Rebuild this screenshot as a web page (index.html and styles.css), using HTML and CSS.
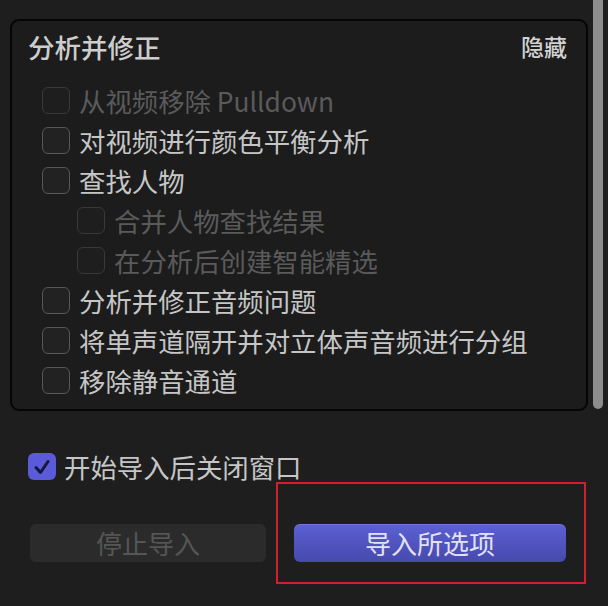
FILE: index.html
```html
<!DOCTYPE html>
<html lang="zh-CN">
<head>
    <meta charset="UTF-8">
    <title>导入选项</title>
    <link rel="stylesheet" href="styles.css">
</head>
<body>
    <div class="window">
        <div class="top">
            <div class="panel">
                <div class="panel-head">
                    <span class="panel-title">分析并修正</span>
                    <span class="panel-toggle">隐藏</span>
                </div>
                <ul class="options">
                    <li class="option disabled"><span class="box"></span>从视频移除 Pulldown</li>
                    <li class="option"><span class="box"></span>对视频进行颜色平衡分析</li>
                    <li class="option"><span class="box"></span>查找人物</li>
                    <li class="option sub disabled"><span class="box"></span>合并人物查找结果</li>
                    <li class="option sub disabled"><span class="box"></span>在分析后创建智能精选</li>
                    <li class="option"><span class="box"></span>分析并修正音频问题</li>
                    <li class="option"><span class="box"></span>将单声道隔开并对立体声音频进行分组</li>
                    <li class="option"><span class="box"></span>移除静音通道</li>
                </ul>
            </div>
            <div class="scroll-track"><div class="scroll-thumb"></div></div>
        </div>

        <div class="close-row">
            <span class="box checked">
                <svg viewBox="0 0 28 28" width="28" height="28"><path d="M8 14.5 L12.5 19.5 L20 8.5" fill="none" stroke="#15163a" stroke-width="3" stroke-linecap="round" stroke-linejoin="round"/></svg>
            </span>
            开始导入后关闭窗口
        </div>

        <div class="actions">
            <button class="btn btn-stop" disabled>停止导入</button>
            <div class="highlight">
                <button class="btn btn-import">导入所选项</button>
            </div>
        </div>
    </div>
</body>
</html>
```

FILE: styles.css
```css
html, body {
    margin: 0;
    padding: 0;
}
body {
    background-color: #1e1e1e;
    font-family: "Noto Sans CJK SC", "Noto Sans", sans-serif;
    color: #c6c6c6;
    width: 608px;
    height: 606px;
    overflow: hidden;
}
.window {
    height: 606px;
    box-sizing: border-box;
}
.top {
    display: flex;
    height: 411px;
}
.panel {
    margin: 19px 0 0 10px;
    width: 578px;
    height: 392px;
    box-sizing: border-box;
    border: 2px solid #050505;
    border-radius: 9px;
    background-color: #1c1c1c;
    padding: 5px 19px 0 16px;
}
.panel-head {
    display: flex;
    justify-content: space-between;
    align-items: center;
    height: 40px;
}
.panel-title {
    font-size: 26.5px;
    font-weight: 500;
    color: #cdcdcd;
}
.panel-toggle {
    font-size: 23px;
    font-weight: 500;
    color: #d2d2d2;
}
.options {
    list-style: none;
    margin: 14px 0 0 0;
    padding: 0 0 0 14px;
}
.option {
    display: flex;
    align-items: center;
    height: 40px;
    font-size: 26.4px;
    color: #c6c6c6;
}
.option.sub {
    padding-left: 35px;
}
.option.disabled {
    color: #5a5a5a;
}
.box {
    flex: none;
    width: 28px;
    height: 27px;
    box-sizing: border-box;
    border: 1.5px solid #575757;
    border-radius: 6px;
    background-color: #222;
    margin-right: 9px;
}
.option.disabled .box {
    border-color: #393939;
    background-color: #1e1e1e;
}
.scroll-track {
    margin-left: 5px;
    width: 15px;
    height: 411px;
    display: flex;
    justify-content: flex-start;
}
.scroll-thumb {
    width: 10px;
    height: 409px;
    background-color: #8d8d8d;
    border-radius: 0 0 5px 5px;
}
.close-row {
    display: flex;
    align-items: center;
    height: 40px;
    margin: 35px 0 0 28px;
    font-size: 26.4px;
    color: #c6c6c6;
}
.box.checked {
    border: none;
    background-color: #5b5bd9;
    margin-right: 8px;
}
.box.checked svg {
    display: block;
}
.actions {
    display: flex;
    align-items: flex-start;
    margin: 38px 0 0 30px;
}
.btn {
    height: 38px;
    border: none;
    border-radius: 6px;
    font-family: inherit;
    font-size: 26px;
    line-height: 38px;
    padding: 0;
}
.btn-stop {
    width: 236px;
    background-color: #2b2b2b;
    color: #565656;
}
.btn-import {
    width: 272px;
    background: linear-gradient(#5c60d4, #4649ad);
    color: #e2e2f4;
    box-shadow: inset 0 1px 0 rgba(255, 255, 255, 0.15);
}
.highlight {
    position: relative;
    margin-left: 28px;
}
.highlight::after {
    content: "";
    position: absolute;
    top: -42px;
    bottom: -22px;
    left: -18px;
    right: -20px;
    border: 2px solid #cf2129;
    pointer-events: none;
}
```
